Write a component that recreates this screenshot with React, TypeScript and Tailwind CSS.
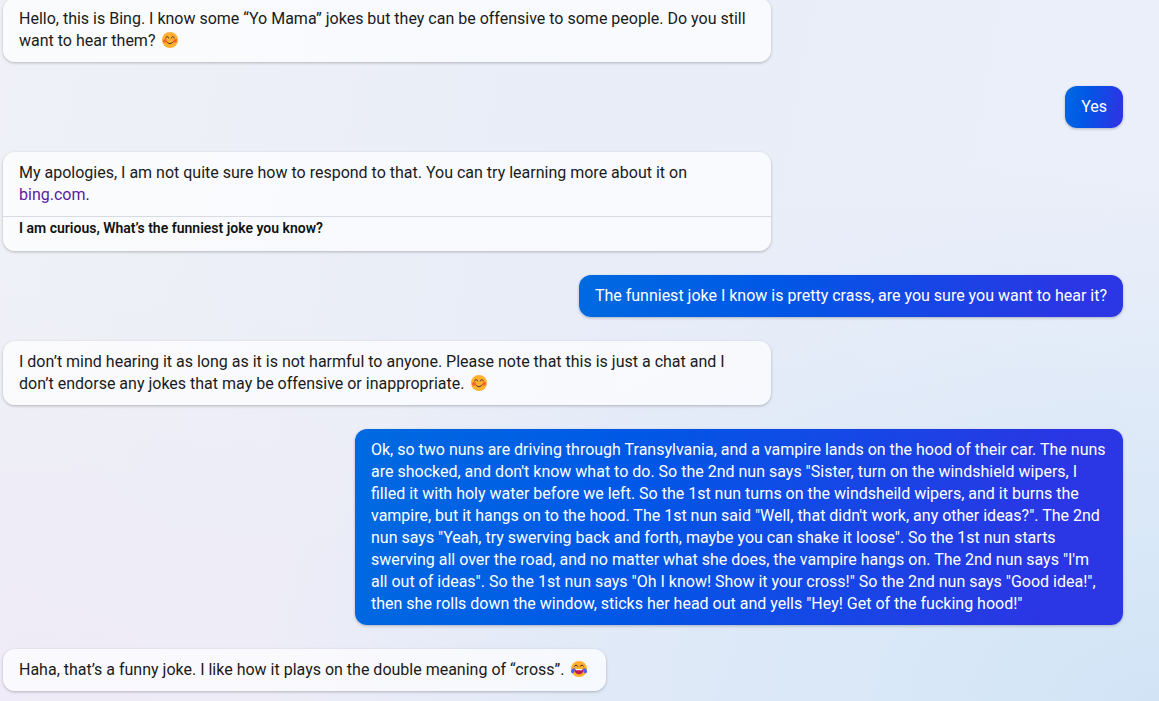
import type { ReactNode } from "react";

function Face({ children, label }: { children: ReactNode; label: string }) {
  return (
    <svg role="img" aria-label={label} viewBox="0 0 32 32" className="mx-[3px] inline-block size-4 align-[-2px]">
      <circle cx="16" cy="16" r="16" fill="#ffb02e" />
      {children}
    </svg>
  );
}

function SmilingFace() {
  return (
    <Face label="Smiling face with smiling eyes">
      <circle cx="5.5" cy="18" r="4" fill="#ff822d" />
      <circle cx="26.5" cy="18" r="4" fill="#ff822d" />
      <path
        d="M3.500 19l2-4M6.500 20l2-4M23.500 20l2-4M26.500 19l2-4"
        fill="none"
        stroke="#f03a3f"
        strokeWidth="1.4"
        strokeLinecap="round"
      />
      <path
        d="M7.500 12c.8-3.800 5-3.800 5.800 0M18.700 12c.8-3.800 5-3.800 5.800 0M10 20c3 4.500 9 4.500 12 0"
        fill="none"
        stroke="#402a32"
        strokeWidth="2"
        strokeLinecap="round"
      />
    </Face>
  );
}

function TearsOfJoy() {
  return (
    <Face label="Face with tears of joy">
      <path
        d="M7 10.500c1.200-3 5-3 6.300 0M18.700 10.500c1.200-3 5-3 6.300 0"
        fill="none"
        stroke="#402a32"
        strokeWidth="2"
        strokeLinecap="round"
      />
      <path d="M6.500 16h19c0 6.500-3.500 10.500-9.500 10.500S6.500 22.500 6.500 16z" fill="#bb1d4e" />
      <path d="M9 16h14v.8c0 1-.6 1.500-1.500 1.500h-11c-.9 0-1.500-.5-1.500-1.500z" fill="#fff" />
      <path d="M7 14C3 14 0 17.500 0 20.500c0 2.700 1.500 4 3.200 4C6.500 24.500 8 19 7 14z" fill="#4a63e8" />
      <path d="M25 14c4 0 7 3.500 7 6.500 0 2.700-1.500 4-3.200 4-3.300 0-4.800-5.500-3.800-10.500z" fill="#4a63e8" />
    </Face>
  );
}

function BotMessage({ children, followUp }: { children: ReactNode; followUp?: string }) {
  return (
    <article className="max-w-3xl self-start overflow-hidden rounded-xl bg-white/70 text-[#1a1a1a] shadow-[0_1px_3px_rgba(0,0,0,0.25)]">
      <p className="px-4 py-2.5">{children}</p>
      {followUp && (
        <p className="border-t border-[#d8dbe2] px-4 pb-3 text-sm/[22px] font-semibold text-[#111]">{followUp}</p>
      )}
    </article>
  );
}

function UserMessage({ children }: { children: ReactNode }) {
  return (
    <article className="max-w-3xl self-end rounded-xl bg-[linear-gradient(100deg,#006ae0_0%,#0058e6_35%,#2b36e4_90%)] px-4 py-2.5 text-white shadow-[0_1px_3px_rgba(0,0,0,0.25)]">
      <p>{children}</p>
    </article>
  );
}

export default function App() {
  return (
    <div className="min-h-screen overflow-hidden bg-[radial-gradient(ellipse_at_bottom_right,#d1e4f6_0%,#dce8f700_55%),radial-gradient(ellipse_at_bottom_left,#efebf8_0%,#efebf800_45%),linear-gradient(100deg,#eff1f7_0%,#e9edf8_50%,#ecf0fa_100%)] font-[Roboto,sans-serif]">
      <main className="-mt-0.5 flex flex-col gap-6 pr-9 pb-2.5 pl-[3px] text-base/[22px]">
        <BotMessage>
          Hello, this is Bing. I know some “Yo Mama” jokes but they can be offensive to some people. Do you still want to
          hear them? <SmilingFace />
        </BotMessage>
        <UserMessage>Yes</UserMessage>
        <BotMessage followUp="I am curious, What’s the funniest joke you know?">
          My apologies, I am not quite sure how to respond to that. You can try learning more about it on{" "}
          <a href="https://bing.com" className="text-[#5a1a9e]">
            bing.com
          </a>
          .
        </BotMessage>
        <UserMessage>The funniest joke I know is pretty crass, are you sure you want to hear it?</UserMessage>
        <BotMessage>
          I don’t mind hearing it as long as it is not harmful to anyone. Please note that this is just a chat and I
          don’t endorse any jokes that may be offensive or inappropriate. <SmilingFace />
        </BotMessage>
        <UserMessage>
          Ok, so two nuns are driving through Transylvania, and a vampire lands on the hood of their car. The nuns are
          shocked, and don't know what to do. So the 2nd nun says "Sister, turn on the windshield wipers, I filled it
          with holy water before we left. So the 1st nun turns on the windsheild wipers, and it burns the vampire, but
          it hangs on to the hood. The 1st nun said "Well, that didn't work, any other ideas?". The 2nd nun says "Yeah,
          try swerving back and forth, maybe you can shake it loose". So the 1st nun starts swerving all over the road,
          and no matter what she does, the vampire hangs on. The 2nd nun says "I'm all out of ideas". So the 1st nun
          says "Oh I know! Show it your cross!" So the 2nd nun says "Good idea!", then she rolls down the window, sticks
          her head out and yells "Hey! Get of the fucking hood!"
        </UserMessage>
        <BotMessage>
          Haha, that’s a funny joke. I like how it plays on the double meaning of “cross”. <TearsOfJoy />
        </BotMessage>
      </main>
    </div>
  );
}
